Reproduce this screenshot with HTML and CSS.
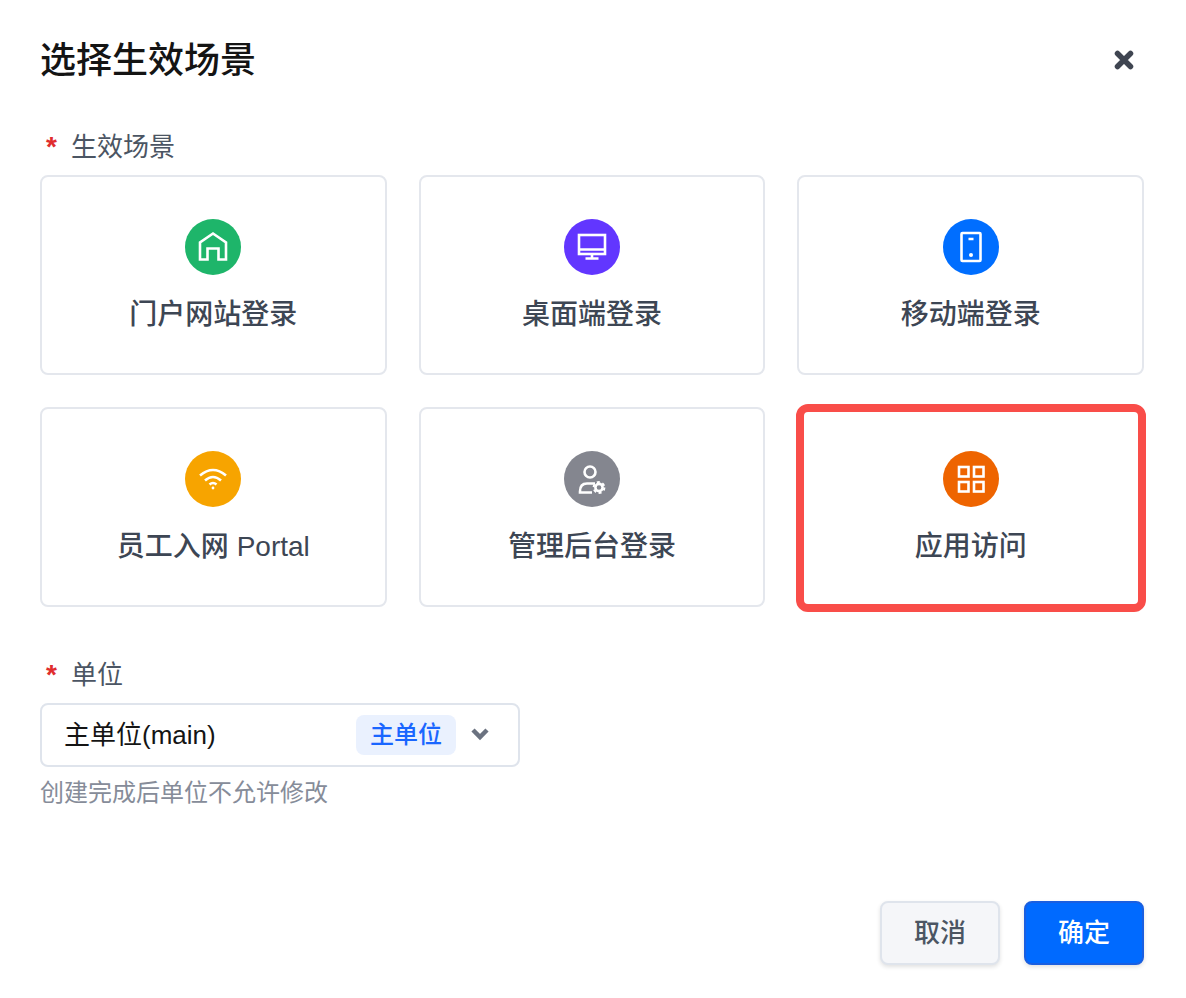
FILE: index.html
```html
<!DOCTYPE html>
<html>
<head>
  <title>选择生效场景</title>
  <meta charset="utf-8" />
  <link rel="stylesheet" href="styles.css">
</head>
<body>

  <div class="dialog">
    <div class="dialog-header">
      <h2>选择生效场景</h2>
      <svg class="close-icon" width="20" height="20" viewBox="0 0 20 20">
        <path d="M3.5 3.5 L16.5 16.5 M16.5 3.5 L3.5 16.5" />
      </svg>
    </div>

    <div class="field-label"><span class="required">*</span>生效场景</div>
    <div class="scene-grid">
      <div class="scene-card">
        <svg class="scene-icon green" width="56" height="56" viewBox="0 0 56 56">
          <path d="M15 40.5 V23.5 L28 14.5 L41 23.5 V40.5 H33.5 V29.5 H22.5 V40.5 Z" />
        </svg>
        <span>门户网站登录</span>
      </div>
      <div class="scene-card">
        <svg class="scene-icon purple" width="56" height="56" viewBox="0 0 56 56">
          <rect x="15" y="16" width="26" height="19" />
          <path d="M15 30.5 H41 M28 35 V39.5 M21.5 39.5 H34.5" />
        </svg>
        <span>桌面端登录</span>
      </div>
      <div class="scene-card">
        <svg class="scene-icon blue" width="56" height="56" viewBox="0 0 56 56">
          <rect x="18.5" y="14" width="19" height="28" rx="1" />
          <path d="M25.5 20 H30.5" />
          <circle class="dot" cx="28" cy="36" r="2" />
        </svg>
        <span>移动端登录</span>
      </div>
      <div class="scene-card">
        <svg class="scene-icon amber" width="56" height="56" viewBox="0 0 56 56">
          <path d="M15 24.5 Q28 13.5 41 24.5 M20 29.5 Q28 22.5 36 29.5 M24.5 33.5 Q28 30.5 31.5 33.5" />
          <circle class="dot" cx="28" cy="37" r="1.4" />
        </svg>
        <span>员工入网 Portal</span>
      </div>
      <div class="scene-card">
        <svg class="scene-icon grey" width="56" height="56" viewBox="0 0 56 56">
          <circle cx="26" cy="21" r="5.5" />
          <path d="M31 32.5 H23 Q16 32.5 16 40.5 V41.5 H28" />
          <circle class="gear" cx="35" cy="36.5" r="3.6" />
          <circle class="gear-teeth" cx="35" cy="36.5" r="5.4" />
        </svg>
        <span>管理后台登录</span>
      </div>
      <div class="scene-card selected">
        <svg class="scene-icon orange" width="56" height="56" viewBox="0 0 56 56">
          <rect x="16" y="16" width="9.5" height="9.5" />
          <rect x="31" y="16" width="9.5" height="9.5" />
          <rect x="16" y="31" width="9.5" height="9.5" />
          <rect x="31" y="31" width="9.5" height="9.5" />
        </svg>
        <span>应用访问</span>
      </div>
    </div>

    <div class="field-label unit-label"><span class="required">*</span>单位</div>
    <div class="unit-select">
      <span class="unit-name">主单位(main)</span>
      <span class="unit-tag">主单位</span>
      <svg class="chevron" width="20" height="14" viewBox="0 0 20 14">
        <path d="M3 3 L10 10 L17 3" />
      </svg>
    </div>
    <div class="hint">创建完成后单位不允许修改</div>

    <div class="button-section">
      <button class="btn-cancel">取消</button>
      <button class="btn-ok">确定</button>
    </div>
  </div>

</body>
</html>
```

FILE: styles.css
```css
body {
  font-family: "Liberation Sans", "Noto Sans CJK SC", sans-serif;
  background-color: #fff;
  margin: 0;
}

.dialog {
  padding: 41px 42px 33px 40px;
}

.dialog-header {
  display: flex;
  justify-content: space-between;
  align-items: center;
  margin-bottom: 46px;
}

h2 {
  margin: 0;
  font-size: 36px;
  line-height: 40px;
  font-weight: 500;
  color: #141414;
}

.close-icon {
  margin-top: -2px;
  margin-right: 10px;
}

.close-icon path {
  fill: none;
  stroke: #3f4551;
  stroke-width: 5.5;
  stroke-linecap: round;
}

.field-label {
  display: flex;
  align-items: center;
  font-size: 26px;
  line-height: 40px;
  color: #4b5563;
  margin-bottom: 8px;
}

.required {
  width: 31px;
  padding-left: 6px;
  box-sizing: border-box;
  color: #e02d2d;
  font-size: 28px;
  font-weight: 700;
}

.scene-grid {
  display: grid;
  grid-template-columns: repeat(3, 1fr);
  gap: 32px;
}

.scene-card {
  position: relative;
  height: 200px;
  box-sizing: border-box;
  border: 2px solid #e4e7ed;
  border-radius: 8px;
  padding-top: 42px;
  display: flex;
  flex-direction: column;
  align-items: center;
  gap: 20px;
  font-size: 28px;
  line-height: 40px;
  font-weight: 500;
  color: #3d4654;
}

.scene-card.selected::after {
  content: "";
  position: absolute;
  top: -5px;
  left: -3px;
  right: -4px;
  bottom: -7px;
  border: 8px solid #f94d49;
  border-radius: 12px;
}

.scene-icon {
  border-radius: 50%;
  flex-shrink: 0;
}

.scene-icon path,
.scene-icon rect,
.scene-icon circle {
  fill: none;
  stroke: #fff;
  stroke-width: 2.6;
}

.scene-icon .dot {
  fill: #fff;
  stroke: none;
}

.scene-icon .gear {
  stroke-width: 2.6;
}

.scene-icon .gear-teeth {
  stroke-width: 2;
  stroke-dasharray: 3 2.65;
}

.green { background-color: #1eb56a; }
.purple { background-color: #6236ff; }
.blue { background-color: #006eff; }
.amber { background-color: #f7a400; }
.grey { background-color: #84868f; }
.orange { background-color: #ee6400; }

.unit-label {
  margin-top: 48px;
}

.unit-select {
  width: 480px;
  height: 64px;
  box-sizing: border-box;
  border: 2px solid #dfe4ec;
  border-radius: 8px;
  padding-left: 22px;
  padding-right: 28px;
  display: flex;
  align-items: center;
  font-size: 26px;
  color: #141414;
}

.unit-name {
  flex: 1;
  padding-bottom: 6px;
}

.unit-tag {
  width: 100px;
  height: 40px;
  line-height: 40px;
  text-align: center;
  background-color: #eaf1fe;
  border-radius: 8px;
  font-size: 24px;
  font-weight: 500;
  color: #1a66ff;
  margin-right: 14px;
}

.chevron {
  margin-bottom: 2px;
}

.chevron path {
  fill: none;
  stroke: #6b7280;
  stroke-width: 4.5;
}

.hint {
  margin-top: 8px;
  font-size: 24px;
  line-height: 36px;
  color: #868c99;
}

.button-section {
  display: flex;
  justify-content: flex-end;
  gap: 24px;
  margin-top: 90px;
}

button {
  width: 120px;
  height: 64px;
  padding: 0 0 6px;
  border-radius: 8px;
  font-family: inherit;
  font-size: 26px;
  font-weight: 500;
  box-shadow: 0 2px 4px rgba(0, 0, 0, 0.12);
}

.btn-cancel {
  background-color: #f5f6f9;
  border: 2px solid #dfe4ec;
  color: #4b5563;
}

.btn-ok {
  background-color: #006aff;
  border: 2px solid #1a5fe0;
  color: #fff;
}
```
